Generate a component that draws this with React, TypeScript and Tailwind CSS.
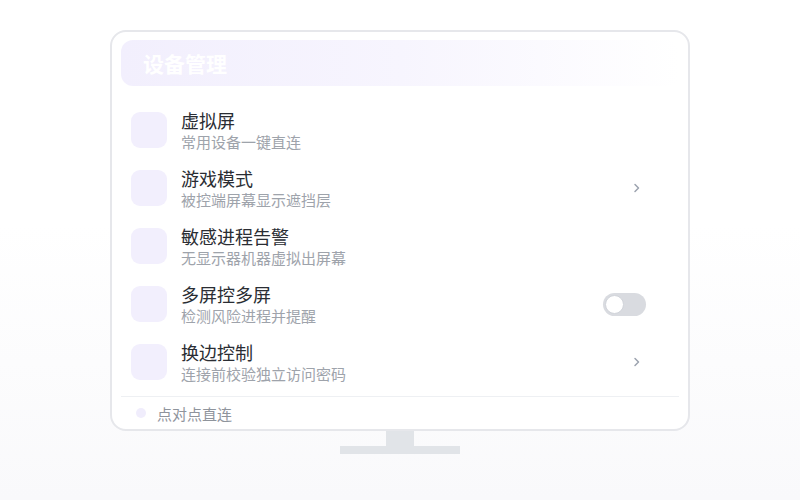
import React from "react";

const rows: { title: string; sub: string; trail: "none" | "chevron" | "toggle" }[] = [
  { title: "虚拟屏", sub: "常用设备一键直连", trail: "none" },
  { title: "游戏模式", sub: "被控端屏幕显示遮挡层", trail: "chevron" },
  { title: "敏感进程告警", sub: "无显示器机器虚拟出屏幕", trail: "none" },
  { title: "多屏控多屏", sub: "检测风险进程并提醒", trail: "toggle" },
  { title: "换边控制", sub: "连接前校验独立访问密码", trail: "chevron" },
];

function Chevron() {
  return (
    <svg width="8" height="12" viewBox="0 0 8 12" fill="none">
      <path d="M2 2.5 L5.5 6 L2 9.5" stroke="#9ca3af" strokeWidth="1.5" strokeLinecap="round" strokeLinejoin="round" />
    </svg>
  );
}

export default function App() {
  return (
    <div
      className="w-[800px] h-[500px] flex flex-col items-center pt-[30px] bg-gradient-to-b from-white from-45% to-[#f9f9fb]"
      style={{ fontFamily: '"Noto Sans CJK SC", "Noto Sans", sans-serif' }}
    >
      <div className="w-[580px] h-[401px] rounded-[16px] border-2 border-[#e6e7eb] bg-white pt-[8px] px-[9px] flex flex-col">
        <div className="h-[46px] rounded-[12px] bg-gradient-to-r from-[#f2effd] via-[#f7f5fe] to-white flex items-center pl-[22px]">
          <span className="text-[21px] font-bold text-white leading-none">设备管理</span>
        </div>
        <div className="mt-[15px] flex flex-col">
          {rows.map((r) => (
            <div key={r.title} className="h-[58px] flex items-center pl-[10px] pr-[33px]">
              <div className="w-[36px] h-[36px] rounded-[9px] bg-[#f2effd] shrink-0" />
              <div className="ml-[14px] flex flex-col flex-1 pt-[1px]">
                <span className="text-[18px] leading-[22px] text-[#2a2d33]">{r.title}</span>
                <span className="text-[15px] leading-[22px] text-[#9ea3ab]">{r.sub}</span>
              </div>
              {r.trail === "chevron" && (
                <div className="mr-[5px] flex items-center">
                  <Chevron />
                </div>
              )}
              {r.trail === "toggle" && (
                <div className="w-[43px] h-[23px] rounded-full bg-[#d9dbe0] flex items-center pl-[2px]">
                  <div className="w-[19px] h-[19px] rounded-full bg-white border border-[#d1d4da]" />
                </div>
              )}
            </div>
          ))}
        </div>
        <div className="mt-[5px] border-t border-[#eef0f3] flex items-center h-[33px] pl-[15px]">
          <div className="w-[10px] h-[10px] rounded-full bg-[#f0edfc]" />
          <span className="ml-[11px] text-[15px] text-[#8f949c] leading-none">点对点直连</span>
        </div>
      </div>
      <div className="w-[28px] h-[15px] bg-[#e1e4e8]" />
      <div className="w-[120px] h-[8px] bg-[#e1e4e8]" />
    </div>
  );
}
